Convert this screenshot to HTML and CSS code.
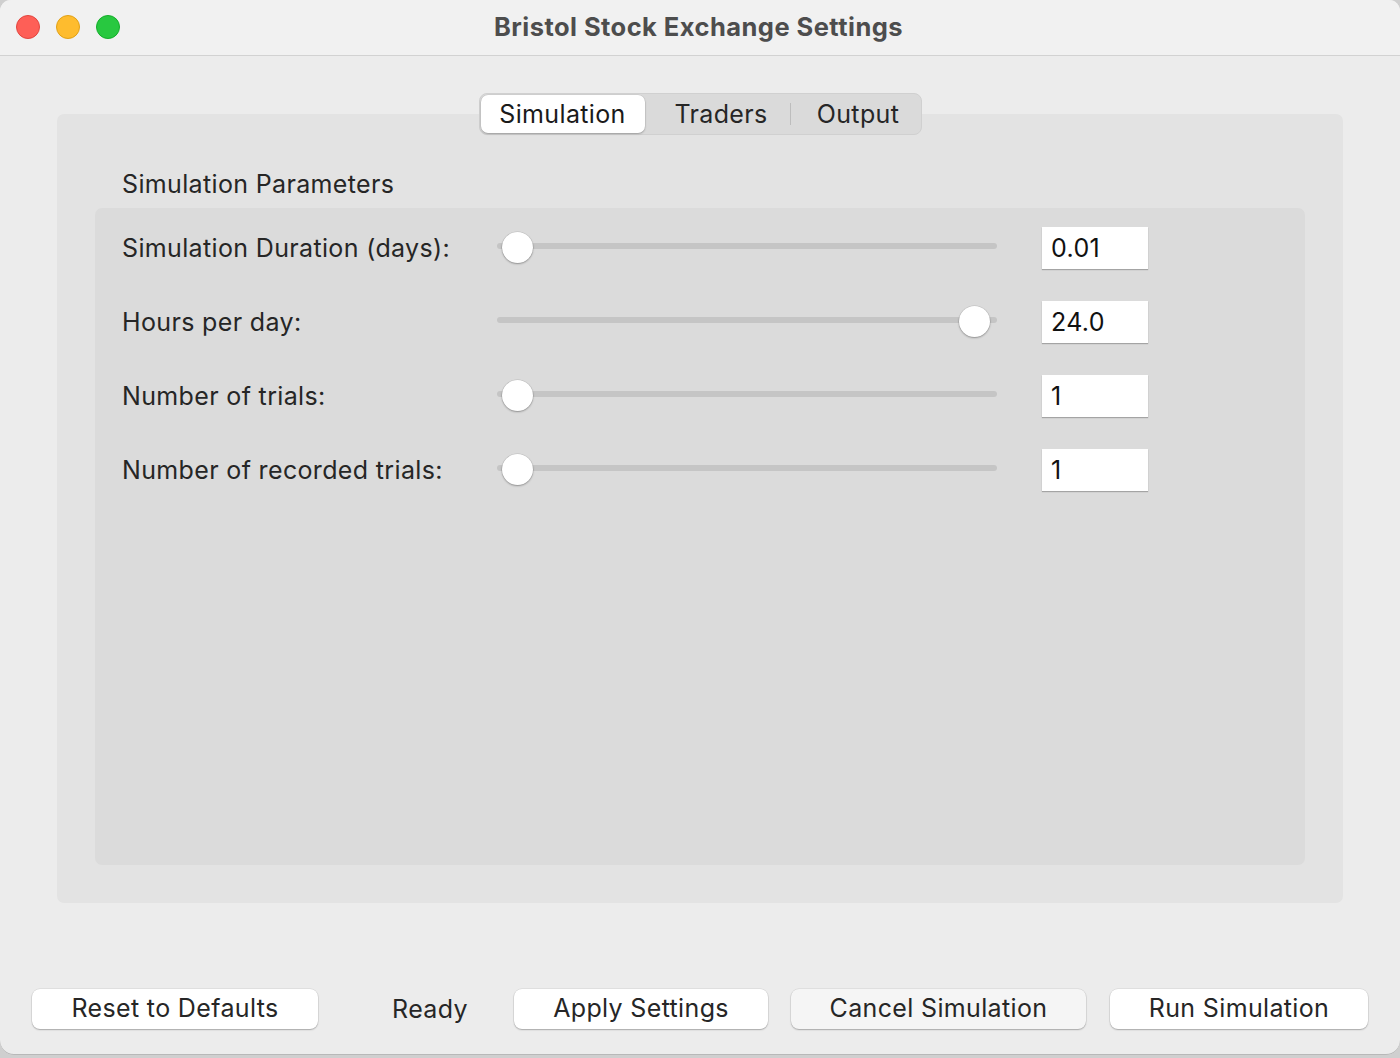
FILE: index.html
```html
<!DOCTYPE html>
<html>
<head>
<meta charset="utf-8">
<link rel="stylesheet" href="styles.css">
</head>
<body>
<div class="window">
  <div class="titlebar">
    <div class="lights">
      <span class="light red"></span>
      <span class="light yellow"></span>
      <span class="light green"></span>
    </div>
    <div class="title">Bristol Stock Exchange Settings</div>
    <div></div>
  </div>
  <div class="content">
    <div class="tabs">
      <div class="tab active">Simulation</div>
      <div class="tab traders">Traders</div>
      <div class="sep"></div>
      <div class="tab output">Output</div>
    </div>
    <div class="pane">
      <div class="heading">Simulation Parameters</div>
      <div class="group">
        <div class="row">
          <div class="label">Simulation Duration (days):</div>
          <div class="slider"><div class="track"></div><div class="knob min"></div></div>
          <div class="input">0.01</div>
        </div>
        <div class="row">
          <div class="label">Hours per day:</div>
          <div class="slider"><div class="track"></div><div class="knob max"></div></div>
          <div class="input">24.0</div>
        </div>
        <div class="row">
          <div class="label">Number of trials:</div>
          <div class="slider"><div class="track"></div><div class="knob min"></div></div>
          <div class="input">1</div>
        </div>
        <div class="row">
          <div class="label">Number of recorded trials:</div>
          <div class="slider"><div class="track"></div><div class="knob min"></div></div>
          <div class="input">1</div>
        </div>
      </div>
    </div>
    <div class="footer">
      <div class="btn reset">Reset to Defaults</div>
      <div class="status">Ready</div>
      <div class="btn apply">Apply Settings</div>
      <div class="btn cancel">Cancel Simulation</div>
      <div class="btn run">Run Simulation</div>
    </div>
  </div>
</div>
</body>
</html>
```

FILE: styles.css
```css
* { box-sizing: border-box; }
html, body { margin: 0; padding: 0; }
body {
  width: 1400px;
  height: 1058px;
  background: #cfcfcf;
  font-family: Inter, "Noto Sans", "Liberation Sans", sans-serif;
  color: #262626;
  overflow: hidden;
}
.window {
  width: 1400px;
  height: 1055px;
  background: #ececec;
  border-radius: 11px 11px 14px 14px;
  overflow: hidden;
  display: flex;
  flex-direction: column;
  box-shadow: inset 0 -1px 0 #b8b8b8;
}
.titlebar {
  height: 56px;
  flex: none;
  background: #f1f1f1;
  border-bottom: 1px solid #d2d2d2;
  display: grid;
  grid-template-columns: 136px 1fr 136px;
  align-items: center;
}
.lights {
  display: flex;
  gap: 16px;
  padding-left: 16px;
  margin-top: -2px;
}
.light {
  width: 24px;
  height: 24px;
  border-radius: 50%;
  display: block;
}
.red { background: #fe5f57; border: 1px solid #e2463f; }
.yellow { background: #febc2e; border: 1px solid #e1a116; }
.green { background: #28c840; border: 1px solid #14ae2a; }
.title {
  text-align: center;
  font-weight: 700;
  font-size: 25.5px;
  letter-spacing: 0.45px;
  color: #4d4d4d;
  margin-top: -3px;
  padding-right: 3px;
}
.content {
  flex: 1;
  display: flex;
  flex-direction: column;
  padding: 37px 57px 0 57px;
}
.tabs {
  align-self: center;
  position: relative;
  z-index: 1;
  display: flex;
  align-items: center;
  height: 42px;
  background: #dadada;
  border: 1px solid #d0d0d0;
  border-radius: 8px;
  padding: 1px;
  font-size: 25px;
  letter-spacing: 0.35px;
  color: #262626;
}
.tab {
  height: 38px;
  line-height: 38px;
  border-radius: 7px;
  text-align: center;
}
.tab.active {
  width: 164px;
  background: #fff;
  color: #1a1a1a;
  box-shadow: 0 1px 2px rgba(0,0,0,0.25), 0 0 0 0.5px rgba(0,0,0,0.08);
}
.tab.traders { width: 145px; padding-left: 8px; }
.tab.output { width: 129px; padding-left: 6px; }
.sep {
  width: 1px;
  height: 22px;
  background: #bdbdbd;
}
.pane {
  margin-top: -21px;
  height: 789px;
  background: #e3e3e3;
  border-radius: 7px;
  padding: 55px 38px 38px 38px;
  display: flex;
  flex-direction: column;
}
.heading {
  font-size: 25px;
  letter-spacing: 0.35px;
  line-height: 30px;
  padding-left: 27px;
  margin-bottom: 9px;
}
.group {
  flex: 1;
  background: #dbdbdb;
  border-radius: 7px;
  padding: 19px 27px;
  display: flex;
  flex-direction: column;
  gap: 32px;
}
.row {
  display: flex;
  align-items: center;
  height: 42px;
}
.label {
  width: 375px;
  font-size: 25px;
  letter-spacing: 0.35px;
}
.slider {
  width: 500px;
  height: 42px;
  position: relative;
  display: flex;
  align-items: center;
}
.track {
  width: 100%;
  height: 6px;
  margin-top: -4px;
  border-radius: 3px;
  background: #c5c5c5;
}
.knob {
  position: absolute;
  top: 5px;
  width: 31px;
  height: 31px;
  border-radius: 50%;
  background: #fff;
  box-shadow: 0 1px 2px rgba(0,0,0,0.3), 0 0 0 0.5px rgba(0,0,0,0.12);
}
.knob.min { left: 5px; }
.knob.max { left: 462px; }
.input {
  margin-left: 45px;
  width: 106px;
  height: 42px;
  background: #fff;
  box-shadow: 0 1px 1px rgba(0,0,0,0.25);
  font-size: 25px;
  letter-spacing: 0.35px;
  line-height: 42px;
  padding-left: 9px;
  color: #111;
}
.footer {
  margin: 86px -25px 0 -25px;
  display: flex;
  align-items: center;
  height: 40px;
}
.btn {
  height: 40px;
  line-height: 39px;
  background: #fff;
  border-radius: 8px;
  text-align: center;
  font-size: 25px;
  letter-spacing: 0.35px;
  color: #262626;
  box-shadow: 0 1px 1.5px rgba(0,0,0,0.25), 0 0 0 0.5px rgba(0,0,0,0.1);
}
.reset { width: 286px; }
.status { width: 196px; text-align: center; font-size: 25px; letter-spacing: 0.35px; padding-left: 28px; }
.apply { width: 254px; }
.cancel { width: 295px; margin-left: 23px; background: #f5f5f5; }
.run { width: 258px; margin-left: 24px; }
```
